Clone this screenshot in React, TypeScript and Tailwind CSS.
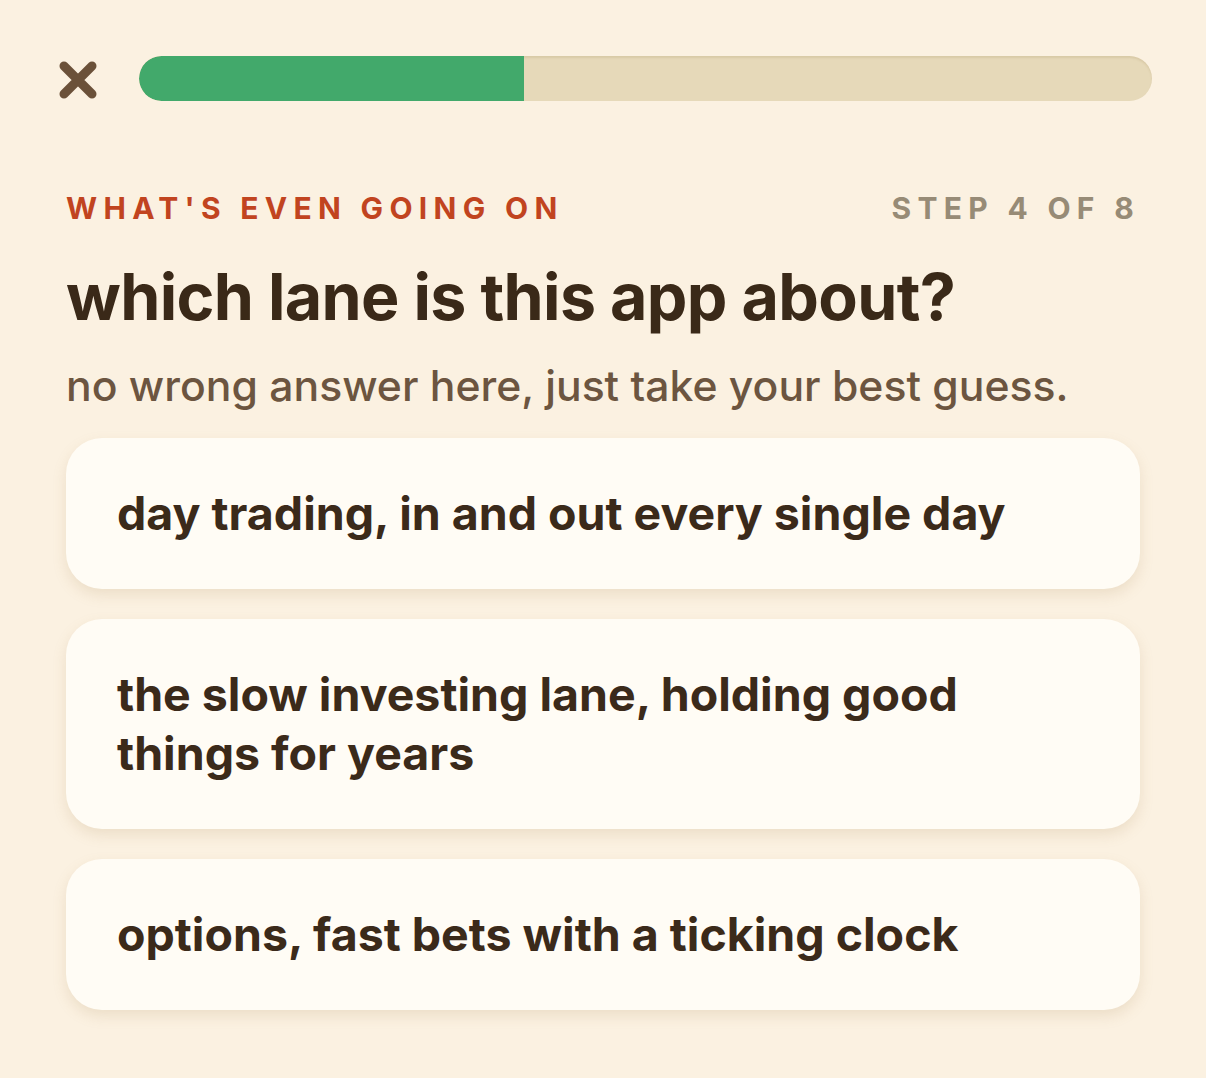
import React from 'react';

const options = [
  'day trading, in and out every single day',
  'the slow investing lane, holding good things for years',
  'options, fast bets with a ticking clock',
];

function CloseIcon() {
  return (
    <svg width="40" height="40" viewBox="0 0 40 40" fill="none">
      <path d="M6 7L34 35M34 7L6 35" stroke="#6b5139" strokeWidth="9" strokeLinecap="round" />
    </svg>
  );
}

export default function App() {
  return (
    <div
      className="min-h-[1078px] w-full bg-[#fbf1e1] text-[#3b2a1b]"
      style={{ fontFamily: 'Inter, "Noto Sans", sans-serif' }}
    >
      <div className="flex items-center gap-[41px] pl-[58px] pr-[54px] pt-[56px]">
        <CloseIcon />
        <div className="h-[45px] flex-1 overflow-hidden rounded-full bg-[#e6d9b9] shadow-[inset_0_2px_2px_rgba(150,120,70,0.15)]">
          <div className="h-full w-[385px] rounded-l-full bg-[#42a96b]" />
        </div>
      </div>

      <div className="px-[66px] pt-[85px]">
        <div className="flex items-center justify-between">
          <span className="text-[30px] font-bold tracking-[0.21em] text-[#c1441f]">WHAT'S EVEN GOING ON</span>
          <span className="text-[30px] font-bold tracking-[0.21em] text-[#978b76]">STEP 4 OF 8</span>
        </div>

        <h1 className="mt-[28px] text-[64.5px] font-bold leading-[1.2] tracking-[-0.01em] text-[#3a2918]">
          which lane is this app about?
        </h1>
        <p className="mt-[24px] text-[42.7px] font-medium leading-[1.2] text-[#6c5540]">
          no wrong answer here, just take your best guess.
        </p>

        <div className="mt-[26px] flex w-[1074px] flex-col gap-[30px]">
          {options.map((text) => (
            <button
              key={text}
              className="rounded-[36px] bg-[#fffcf5] py-[46px] pl-[51px] pr-[100px] text-left text-[46.5px] font-bold leading-[59px] text-[#3b2a1a] shadow-[0_6px_14px_rgba(170,140,90,0.18)]"
            >
              {text}
            </button>
          ))}
        </div>
      </div>
    </div>
  );
}
